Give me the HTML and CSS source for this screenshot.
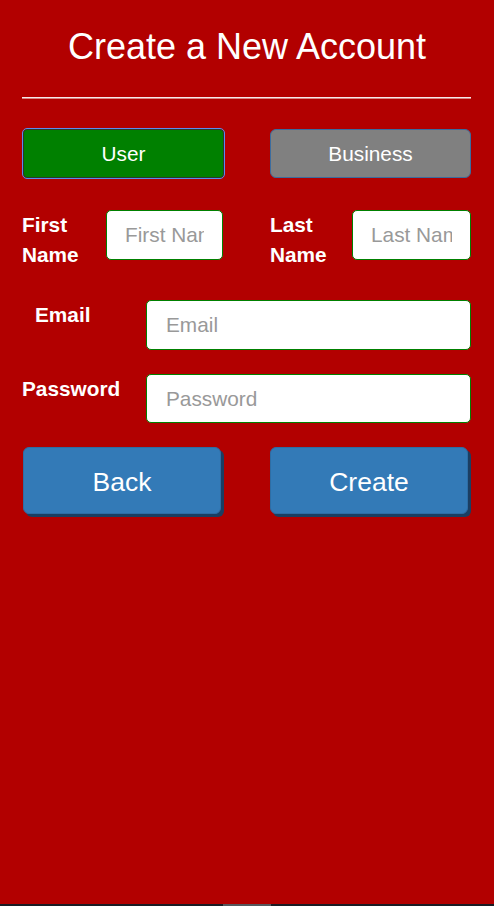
FILE: index.html
```html
<!DOCTYPE html>
<html lang="en">
<head>
<meta charset="utf-8">
<title>Create a New Account</title>
<link rel="stylesheet" href="styles.css">
</head>
<body>
<div class="page">
  <h1 class="title">Create a New Account</h1>
  <hr class="divider">
  <div class="toggle-row">
    <button class="toggle toggle-user" type="button">User</button>
    <button class="toggle toggle-business" type="button">Business</button>
  </div>
  <div class="name-row">
    <div class="name-group">
      <label class="label label-first">First Name</label>
      <input class="field field-first" type="text" placeholder="First Name">
    </div>
    <div class="name-group">
      <label class="label label-last">Last Name</label>
      <input class="field field-last" type="text" placeholder="Last Name">
    </div>
  </div>
  <div class="form-row row-email">
    <label class="label label-wide label-email">Email</label>
    <input class="field field-wide" type="text" placeholder="Email">
  </div>
  <div class="form-row row-password">
    <label class="label label-wide">Password</label>
    <input class="field field-wide" type="password" placeholder="Password">
  </div>
  <div class="action-row">
    <button class="action" type="button">Back</button>
    <button class="action" type="button">Create</button>
  </div>
</div>
<div class="bottom-strip"><span class="strip-mark"></span></div>
</body>
</html>
```
FILE: styles.css
```css
html, body {
  margin: 0;
  padding: 0;
  background: #ffffff;
}

body {
  font-family: "Liberation Sans", Arial, sans-serif;
  color: #ffffff;
}

.page {
  box-sizing: border-box;
  width: 494px;
  height: 904px;
  background: #b20000;
  padding: 26px 23px 0 22px;
}

.title {
  margin: 0;
  font-size: 36px;
  line-height: 41px;
  font-weight: normal;
  text-align: center;
  padding-left: 1px;
}

.divider {
  margin: 30px 0 0 0;
  height: 0;
  border: 0;
  border-top: 1px solid #f4eaea;
  border-bottom: 1px solid #d98080;
}

.toggle-row {
  display: flex;
  justify-content: space-between;
  margin-top: 29px;
  padding: 1px 0;
}

.toggle {
  box-sizing: border-box;
  height: 49px;
  font-family: "Liberation Sans", Arial, sans-serif;
  font-size: 20.8px;
  color: #ffffff;
  border-radius: 5px;
  padding: 0;
  cursor: pointer;
}

.toggle-user {
  width: 201px;
  margin-left: 1px;
  background: #008000;
  border: 1px solid #2a3a2a;
  border-radius: 4px;
  outline: 1px solid #5a8cf0;
}

.toggle-business {
  width: 201px;
  background: #808080;
  border: 1px solid #3b6c9e;
  border-radius: 6px;
}

.name-row {
  display: flex;
  justify-content: space-between;
  margin-top: 31px;
}

.name-group {
  display: flex;
  align-items: flex-start;
}

.label {
  font-size: 20.8px;
  font-weight: bold;
  line-height: 30px;
  white-space: normal;
}

.label-first {
  width: 84px;
}

.label-last {
  width: 82px;
}

.field {
  box-sizing: border-box;
  height: 50px;
  border: 1px solid #008000;
  border-radius: 5px;
  background: #ffffff;
  padding: 0 18px;
  font-family: "Liberation Sans", Arial, sans-serif;
  font-size: 20.8px;
  color: #333333;
  outline: none;
}

.field::placeholder {
  color: #999999;
}

.field-first {
  width: 117px;
}

.field-last {
  width: 119px;
}

.form-row {
  display: flex;
  align-items: flex-start;
}

.row-email {
  margin-top: 30px;
}

.row-password {
  margin-top: 24px;
}

.row-password .field {
  height: 49px;
}

.label-wide {
  width: 124px;
  box-sizing: border-box;
}

.label-email {
  padding-left: 13px;
}

.field-wide {
  flex: 1;
  padding-left: 19px;
}

.action-row {
  display: flex;
  justify-content: space-between;
  margin-top: 24px;
  padding: 0 3px 0 1px;
}

.action {
  box-sizing: border-box;
  width: 198px;
  height: 67px;
  background: #337ab7;
  border: 1px solid #2e6da4;
  border-radius: 6px;
  box-shadow: 3px 3px 0 #1b3e62;
  color: #ffffff;
  font-family: "Liberation Sans", Arial, sans-serif;
  font-size: 26.5px;
  padding: 4px 0 0 0;
  cursor: pointer;
}

.bottom-strip {
  width: 494px;
  height: 2px;
  background: #1a1c24;
  position: relative;
}

.strip-mark {
  position: absolute;
  left: 223px;
  top: 0;
  width: 48px;
  height: 2px;
  background: #55575c;
}
```
